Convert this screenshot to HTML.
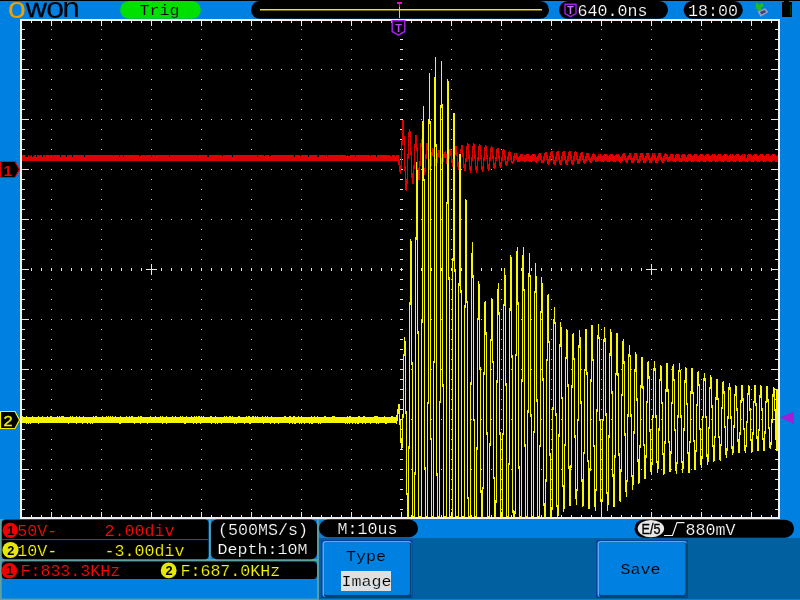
<!DOCTYPE html><html><head><meta charset="utf-8"><title>OWON oscilloscope</title>
<style>html,body{margin:0;padding:0;background:#0080e0;overflow:hidden}svg{display:block;will-change:transform}text{white-space:pre}</style></head><body>
<svg width="800" height="600" viewBox="0 0 800 600">
<rect width="800" height="600" fill="#0080e0"/>
<rect width="800" height="1" fill="#000" shape-rendering="crispEdges"/>
<text transform="scale(1.11 1)" font-family="'Liberation Sans','DejaVu Sans',sans-serif" font-size="29.5" fill="#000"><tspan x="6.94" y="17.5" fill="#f0a000">o</tspan><tspan x="23.2" y="16.8" font-size="26.4" stroke="#000" stroke-width="0.3">w</tspan><tspan x="41.35" y="17.5">o</tspan><tspan x="56.1" y="17" font-size="28.4">n</tspan></text>
<rect x="120.2" y="1" width="80.6" height="17.8" rx="8.9" fill="#00e000"/>
<text transform="translate(139.6 14.6) scale(1 0.88)" fill="#000" font-size="16.67" font-family="'Liberation Mono','DejaVu Sans Mono',monospace"  stroke="#00e000" stroke-width="0.2">Trig</text>
<rect x="251" y="1" width="298" height="17.8" rx="8.9" fill="#000"/>
<g shape-rendering="crispEdges"><rect x="260" y="9" width="282" height="1" fill="#e8e800"/><rect x="260" y="10" width="282" height="1" fill="#706800"/>
<rect x="397" y="2" width="5" height="2" fill="#ff00e0"/><rect x="399" y="4" width="1" height="3" fill="#ff00e0"/><rect x="399" y="7" width="1" height="11" fill="#c0c0c0"/></g>
<rect x="559" y="1" width="109" height="17.8" rx="8.9" fill="#000"/>
<path d="M565 4.2H576V13.5L570.5 16.6L565 13.5Z" fill="#000" stroke="#a020e8" stroke-width="1.4"/>
<text x="570.5" y="13.6" text-anchor="middle" fill="#d070ff" font-family="'Liberation Sans','DejaVu Sans',sans-serif" font-weight="bold" font-size="10.5">T</text>
<text x="577.5" y="15.6" fill="#ffffff" font-size="16.67" font-family="'Liberation Mono','DejaVu Sans Mono',monospace"  stroke="#000" stroke-width="0.2">640.0ns</text>
<rect x="683.6" y="1" width="59.2" height="17.8" rx="8.9" fill="#000"/>
<text x="688" y="15.6" fill="#ffffff" font-size="16.67" font-family="'Liberation Mono','DejaVu Sans Mono',monospace"  stroke="#000" stroke-width="0.2">18:00</text>
<g><path d="M757.5 11.3L765.2 8.2L768.4 12L760.6 16.8Z" fill="#98a0c8"/><path d="M759.8 11.9L764.6 9.9L766.2 12L761.5 14.6Z" fill="#3c4470"/><path d="M756 2.6L759.2 4.6L762.2 2.8L763.8 5.6L761 8L762.2 10.4L757.6 10.6L755.6 7.6Z" fill="#28b820"/></g>
<rect x="782" y="2" width="10" height="15" fill="#000" shape-rendering="crispEdges"/><rect x="784" y="1" width="5" height="1" fill="#000" shape-rendering="crispEdges"/><rect x="790" y="5" width="1" height="10" fill="#083408" shape-rendering="crispEdges"/>
<g shape-rendering="crispEdges">
<rect x="20" y="19" width="760" height="500" fill="#f4f0f0"/>
<rect x="22" y="21" width="756" height="496" fill="#000"/>
<g stroke="#c8c8c8" stroke-width="1" fill="none"><path d="M51.5 29V516" stroke-dasharray="1 9"/><path d="M101.5 29V516" stroke-dasharray="1 9"/><path d="M151.5 29V516" stroke-dasharray="1 9"/><path d="M201.5 29V516" stroke-dasharray="1 9"/><path d="M251.5 29V516" stroke-dasharray="1 9"/><path d="M301.5 29V516" stroke-dasharray="1 9"/><path d="M351.5 29V516" stroke-dasharray="1 9"/><path d="M451.5 29V516" stroke-dasharray="1 9"/><path d="M501.5 29V516" stroke-dasharray="1 9"/><path d="M551.5 29V516" stroke-dasharray="1 9"/><path d="M601.5 29V516" stroke-dasharray="1 9"/><path d="M651.5 29V516" stroke-dasharray="1 9"/><path d="M701.5 29V516" stroke-dasharray="1 9"/><path d="M751.5 29V516" stroke-dasharray="1 9"/><path d="M31 69.5H777" stroke-dasharray="1 9"/><path d="M31 119.5H777" stroke-dasharray="1 9"/><path d="M31 169.5H777" stroke-dasharray="1 9"/><path d="M31 219.5H777" stroke-dasharray="1 9"/><path d="M31 319.5H777" stroke-dasharray="1 9"/><path d="M31 369.5H777" stroke-dasharray="1 9"/><path d="M31 419.5H777" stroke-dasharray="1 9"/><path d="M31 469.5H777" stroke-dasharray="1 9"/></g>
<g stroke="#e8e8e8" stroke-width="1" fill="none"><path d="M31 269.5H777" stroke-width="3" stroke-dasharray="1 9"/><path d="M401.5 29V516" stroke-width="3" stroke-dasharray="1 9"/><path d="M146 269.5H157M151.5 264V275"/><path d="M646 269.5H657M651.5 264V275"/><path d="M31 22H777" stroke-width="2" stroke-dasharray="1 9"/><path d="M51 23.5H777" stroke-width="5" stroke-dasharray="1 49"/><path d="M31 516H777" stroke-width="2" stroke-dasharray="1 9"/><path d="M51 514.5H777" stroke-width="5" stroke-dasharray="1 49"/><path d="M23.5 29V516" stroke-width="3" stroke-dasharray="1 9"/><path d="M25.5 69V516" stroke-width="7" stroke-dasharray="1 49"/><path d="M776.5 29V516" stroke-width="3" stroke-dasharray="1 9"/><path d="M774.5 69V516" stroke-width="7" stroke-dasharray="1 49"/></g>
<path d="M22.5 155V161M23.5 155V161M24.5 155V161M25.5 157V161M26.5 157V161M27.5 157V161M28.5 155V161M29.5 157V161M30.5 156V161M31.5 155V161M32.5 157V161M33.5 156V161M34.5 155V161M35.5 155V161M36.5 157V161M37.5 155V161M38.5 155V161M39.5 156V161M40.5 155V161M41.5 155V161M42.5 157V161M43.5 155V161M44.5 155V161M45.5 157V161M46.5 155V161M47.5 155V161M48.5 155V161M49.5 156V161M50.5 155V161M51.5 155V161M52.5 155V161M53.5 155V161M54.5 155V161M55.5 155V161M56.5 155V161M57.5 155V161M58.5 155V161M59.5 155V161M60.5 157V161M61.5 155V161M62.5 155V161M63.5 155V161M64.5 155V161M65.5 155V161M66.5 157V161M67.5 155V161M68.5 155V161M69.5 155V161M70.5 155V161M71.5 155V161M72.5 157V161M73.5 155V161M74.5 155V161M75.5 155V161M76.5 155V161M77.5 155V161M78.5 155V161M79.5 155V161M80.5 155V161M81.5 155V161M82.5 155V161M83.5 155V161M84.5 157V161M85.5 155V161M86.5 155V161M87.5 155V161M88.5 155V161M89.5 155V161M90.5 155V161M91.5 155V161M92.5 155V161M93.5 155V161M94.5 155V161M95.5 155V161M96.5 155V161M97.5 155V161M98.5 155V161M99.5 155V161M100.5 155V161M101.5 155V161M102.5 155V161M103.5 155V161M104.5 155V161M105.5 155V161M106.5 155V161M107.5 155V161M108.5 155V161M109.5 155V161M110.5 155V161M111.5 155V161M112.5 155V161M113.5 156V161M114.5 155V161M115.5 155V161M116.5 155V161M117.5 155V161M118.5 155V161M119.5 157V161M120.5 155V161M121.5 155V161M122.5 155V161M123.5 157V161M124.5 155V161M125.5 155V161M126.5 155V161M127.5 155V161M128.5 155V161M129.5 155V161M130.5 155V161M131.5 155V161M132.5 155V161M133.5 155V161M134.5 155V161M135.5 155V161M136.5 155V161M137.5 155V161M138.5 155V161M139.5 157V161M140.5 156V161M141.5 155V161M142.5 155V161M143.5 155V161M144.5 155V161M145.5 156V161M146.5 155V161M147.5 155V161M148.5 155V161M149.5 155V161M150.5 155V161M151.5 157V161M152.5 155V161M153.5 155V161M154.5 155V161M155.5 156V161M156.5 155V161M157.5 155V161M158.5 155V161M159.5 155V161M160.5 155V161M161.5 155V161M162.5 155V161M163.5 155V161M164.5 155V161M165.5 155V161M166.5 155V161M167.5 155V161M168.5 155V161M169.5 157V161M170.5 155V161M171.5 155V161M172.5 155V161M173.5 155V161M174.5 155V161M175.5 155V161M176.5 155V161M177.5 155V161M178.5 155V161M179.5 155V161M180.5 155V161M181.5 155V161M182.5 155V161M183.5 155V161M184.5 155V161M185.5 155V161M186.5 155V161M187.5 155V161M188.5 155V161M189.5 155V161M190.5 155V161M191.5 155V161M192.5 155V161M193.5 155V161M194.5 155V161M195.5 155V161M196.5 155V161M197.5 156V161M198.5 155V161M199.5 155V161M200.5 155V161M201.5 155V161M202.5 155V161M203.5 155V161M204.5 155V161M205.5 155V161M206.5 155V161M207.5 157V161M208.5 157V161M209.5 155V161M210.5 155V161M211.5 155V161M212.5 155V161M213.5 155V161M214.5 155V161M215.5 155V161M216.5 155V161M217.5 155V161M218.5 155V161M219.5 155V161M220.5 155V161M221.5 155V161M222.5 156V161M223.5 155V161M224.5 155V161M225.5 155V161M226.5 155V161M227.5 155V161M228.5 155V161M229.5 155V161M230.5 155V161M231.5 155V161M232.5 157V161M233.5 155V161M234.5 155V161M235.5 155V161M236.5 155V161M237.5 155V161M238.5 155V161M239.5 155V161M240.5 155V161M241.5 155V161M242.5 155V161M243.5 155V161M244.5 155V161M245.5 155V161M246.5 155V161M247.5 155V161M248.5 155V161M249.5 155V161M250.5 155V161M251.5 155V161M252.5 155V161M253.5 155V161M254.5 155V161M255.5 155V161M256.5 155V161M257.5 157V161M258.5 155V161M259.5 155V161M260.5 155V161M261.5 155V161M262.5 155V161M263.5 155V161M264.5 156V161M265.5 155V161M266.5 155V161M267.5 155V161M268.5 155V161M269.5 157V161M270.5 156V161M271.5 155V161M272.5 155V161M273.5 155V161M274.5 155V161M275.5 155V161M276.5 155V161M277.5 155V161M278.5 155V161M279.5 155V161M280.5 155V161M281.5 155V161M282.5 155V161M283.5 155V161M284.5 155V161M285.5 155V161M286.5 155V161M287.5 155V161M288.5 155V161M289.5 155V161M290.5 155V161M291.5 155V161M292.5 155V161M293.5 155V161M294.5 157V161M295.5 155V161M296.5 155V161M297.5 155V161M298.5 155V161M299.5 155V161M300.5 156V161M301.5 155V161M302.5 155V161M303.5 155V161M304.5 155V161M305.5 155V161M306.5 155V161M307.5 155V161M308.5 157V161M309.5 155V161M310.5 155V161M311.5 155V161M312.5 155V161M313.5 155V161M314.5 155V161M315.5 155V161M316.5 155V161M317.5 157V161M318.5 157V161M319.5 155V161M320.5 155V161M321.5 155V161M322.5 155V161M323.5 155V161M324.5 155V161M325.5 156V161M326.5 155V161M327.5 157V161M328.5 155V161M329.5 155V161M330.5 155V161M331.5 155V161M332.5 155V161M333.5 155V161M334.5 155V161M335.5 155V161M336.5 155V161M337.5 155V161M338.5 155V161M339.5 155V161M340.5 155V161M341.5 155V161M342.5 155V161M343.5 155V161M344.5 155V161M345.5 155V161M346.5 156V161M347.5 155V161M348.5 156V161M349.5 156V161M350.5 155V161M351.5 155V161M352.5 155V161M353.5 155V161M354.5 155V161M355.5 157V161M356.5 155V161M357.5 155V161M358.5 155V161M359.5 155V161M360.5 155V161M361.5 155V161M362.5 155V161M363.5 155V161M364.5 155V161M365.5 155V161M366.5 155V161M367.5 155V161M368.5 155V161M369.5 155V161M370.5 156V161M371.5 155V161M372.5 155V161M373.5 155V161M374.5 155V161M375.5 155V161M376.5 157V161M377.5 155V161M378.5 155V161M379.5 155V161M380.5 155V161M381.5 155V161M382.5 155V161M383.5 155V161M384.5 155V161M385.5 155V161M386.5 155V161M387.5 155V161M388.5 155V161M389.5 155V161M390.5 156V161M391.5 157V161M392.5 155V161M393.5 155V161M394.5 155V161M395.5 157V161M396.5 155V161M397.5 155V161M398.5 155V165M399.5 160V172M400.5 165V174M401.5 141V169M402.5 120V145M403.5 120V140M404.5 136V171M405.5 166V190M406.5 179V191M407.5 154V184M408.5 132V159M409.5 129V137M410.5 131V155M411.5 151V178M412.5 173V184M413.5 165V184M414.5 144V169M415.5 135V148M416.5 135V151M417.5 147V172M418.5 168V180M419.5 161V180M420.5 143V166M421.5 139V147M422.5 140V158M423.5 154V173M424.5 168V175M425.5 154V172M426.5 143V159M427.5 143V151M428.5 147V164M429.5 159V170M430.5 161V170M431.5 152V166M432.5 148V156M433.5 149V157M434.5 152V164M435.5 159V166M436.5 159V166M437.5 153V163M438.5 150V157M439.5 150V158M440.5 153V162M441.5 158V164M442.5 158V164M443.5 154V162M444.5 152V158M445.5 151V158M446.5 154V164M447.5 160V166M448.5 155V165M449.5 149V159M450.5 149V156M451.5 151V163M452.5 159V167M453.5 160V167M454.5 151V164M455.5 146V155M456.5 146V156M457.5 152V167M458.5 162V170M459.5 159V170M460.5 149V164M461.5 145V153M462.5 145V157M463.5 153V168M464.5 164V171M465.5 158V171M466.5 146V162M467.5 143V150M468.5 144V159M469.5 154V170M470.5 166V173M471.5 157V171M472.5 146V161M473.5 143V150M474.5 144V159M475.5 154V170M476.5 166V173M477.5 157V171M478.5 146V161M479.5 144V150M480.5 145V159M481.5 155V170M482.5 166V172M483.5 157V171M484.5 147V161M485.5 145V151M486.5 146V159M487.5 155V169M488.5 164V171M489.5 157V170M490.5 148V161M491.5 146V152M492.5 147V159M493.5 155V168M494.5 163V169M495.5 157V168M496.5 149V161M497.5 148V153M498.5 148V159M499.5 155V166M500.5 162V168M501.5 157V167M502.5 150V161M503.5 149V155M504.5 150V160M505.5 155V165M506.5 161V166M507.5 156V165M508.5 152V161M509.5 151V156M510.5 152V160M511.5 155V163M512.5 161V164M513.5 156V163M514.5 153V161M515.5 155V158M516.5 153V160M517.5 155V162M518.5 157V162M519.5 156V162M520.5 154V161M521.5 154V160M522.5 154V161M523.5 157V161M524.5 155V162M525.5 155V162M526.5 154V161M527.5 154V160M528.5 154V161M529.5 155V162M530.5 156V162M531.5 155V162M532.5 154V161M533.5 154V160M534.5 154V161M535.5 155V162M536.5 157V163M537.5 156V162M538.5 154V161M539.5 153V158M540.5 153V160M541.5 156V163M542.5 160V163M543.5 156V163M544.5 153V161M545.5 152V157M546.5 152V160M547.5 155V164M548.5 159V165M549.5 156V164M550.5 152V161M551.5 151V156M552.5 151V160M553.5 155V164M554.5 160V165M555.5 156V165M556.5 152V161M557.5 151V156M558.5 151V160M559.5 155V164M560.5 160V165M561.5 156V165M562.5 152V161M563.5 151V156M564.5 151V160M565.5 155V164M566.5 160V165M567.5 156V165M568.5 152V161M569.5 151V156M570.5 151V160M571.5 155V164M572.5 160V165M573.5 156V165M574.5 152V161M575.5 151V156M576.5 152V160M577.5 155V164M578.5 159V164M579.5 156V164M580.5 153V161M581.5 152V157M582.5 152V160M583.5 155V163M584.5 159V164M585.5 156V163M586.5 153V161M587.5 153V158M588.5 153V160M589.5 156V162M590.5 158V163M591.5 156V163M592.5 154V161M593.5 153V159M594.5 154V160M595.5 155V162M596.5 157V162M597.5 156V162M598.5 154V161M599.5 156V159M600.5 154V161M601.5 155V162M602.5 156V162M603.5 155V162M604.5 154V161M605.5 154V160M606.5 154V161M607.5 155V162M608.5 156V162M609.5 155V162M610.5 154V161M611.5 154V160M612.5 154V161M613.5 155V162M614.5 156V162M615.5 155V162M616.5 154V161M617.5 155V160M618.5 154V161M619.5 155V162M620.5 157V163M621.5 156V162M622.5 154V161M623.5 153V158M624.5 153V160M625.5 155V162M626.5 158V163M627.5 156V163M628.5 155V160M629.5 153V158M630.5 153V160M631.5 156V163M632.5 158V163M633.5 156V163M634.5 153V161M635.5 153V158M636.5 153V160M637.5 155V163M638.5 159V163M639.5 156V163M640.5 153V161M641.5 153V158M642.5 153V160M643.5 155V163M644.5 158V163M645.5 156V163M646.5 153V161M647.5 153V158M648.5 153V160M649.5 155V163M650.5 158V163M651.5 156V163M652.5 153V161M653.5 155V158M654.5 153V160M655.5 155V163M656.5 158V163M657.5 156V163M658.5 153V161M659.5 153V158M660.5 153V160M661.5 156V162M662.5 158V163M663.5 156V163M664.5 154V161M665.5 153V159M666.5 154V160M667.5 155V162M668.5 157V162M669.5 156V162M670.5 154V161M671.5 154V160M672.5 154V161M673.5 155V162M674.5 158V162M675.5 155V162M676.5 154V161M677.5 154V160M678.5 154V161M679.5 155V162M680.5 158V162M681.5 155V162M682.5 154V161M683.5 154V160M684.5 154V161M685.5 155V162M686.5 157V162M687.5 155V162M688.5 154V161M689.5 154V160M690.5 154V161M691.5 155V162M692.5 156V162M693.5 155V162M694.5 154V161M695.5 154V160M696.5 154V161M697.5 155V162M698.5 156V162M699.5 155V162M700.5 154V161M701.5 154V160M702.5 154V161M703.5 155V162M704.5 156V162M705.5 155V162M706.5 154V161M707.5 154V160M708.5 154V161M709.5 155V162M710.5 156V162M711.5 155V162M712.5 154V161M713.5 155V160M714.5 154V161M715.5 155V162M716.5 156V162M717.5 155V162M718.5 154V161M719.5 154V160M720.5 154V161M721.5 155V162M722.5 156V162M723.5 155V162M724.5 154V161M725.5 154V160M726.5 154V161M727.5 155V162M728.5 156V162M729.5 155V162M730.5 154V161M731.5 156V160M732.5 154V161M733.5 155V162M734.5 156V162M735.5 155V162M736.5 154V161M737.5 154V160M738.5 154V161M739.5 155V162M740.5 156V162M741.5 155V162M742.5 154V161M743.5 156V160M744.5 154V161M745.5 155V162M746.5 158V162M747.5 155V162M748.5 154V161M749.5 154V160M750.5 154V161M751.5 155V162M752.5 156V162M753.5 155V162M754.5 154V161M755.5 154V160M756.5 154V161M757.5 155V162M758.5 156V162M759.5 155V162M760.5 154V161M761.5 154V160M762.5 154V161M763.5 155V162M764.5 156V162M765.5 155V162M766.5 154V161M767.5 154V160M768.5 154V161M769.5 155V162M770.5 156V162M771.5 155V162M772.5 154V161M773.5 154V160M774.5 154V161M775.5 155V162M776.5 156V162M777.5 155V162" stroke="#e00000" stroke-width="1" fill="none"/>
<path d="M22.5 416V423M23.5 417V423M24.5 417V423M25.5 417V423M26.5 416V424M27.5 417V423M28.5 417V424M29.5 417V423M30.5 417V424M31.5 417V423M32.5 416V423M33.5 417V423M34.5 417V423M35.5 417V423M36.5 417V423M37.5 417V423M38.5 416V424M39.5 417V423M40.5 417V423M41.5 417V423M42.5 416V423M43.5 417V423M44.5 417V423M45.5 417V423M46.5 417V423M47.5 416V423M48.5 417V423M49.5 417V423M50.5 416V423M51.5 416V423M52.5 417V423M53.5 417V423M54.5 417V423M55.5 417V423M56.5 417V423M57.5 416V423M58.5 417V423M59.5 416V423M60.5 417V423M61.5 416V423M62.5 416V423M63.5 416V423M64.5 417V423M65.5 417V423M66.5 417V423M67.5 417V423M68.5 417V424M69.5 417V423M70.5 416V423M71.5 417V423M72.5 416V423M73.5 417V423M74.5 417V423M75.5 417V423M76.5 416V424M77.5 417V423M78.5 417V423M79.5 416V423M80.5 417V423M81.5 417V423M82.5 417V424M83.5 416V423M84.5 417V423M85.5 417V423M86.5 417V423M87.5 417V424M88.5 417V423M89.5 417V423M90.5 417V424M91.5 417V423M92.5 417V424M93.5 416V423M94.5 417V423M95.5 416V423M96.5 416V423M97.5 417V423M98.5 417V423M99.5 417V423M100.5 417V423M101.5 417V423M102.5 416V423M103.5 417V423M104.5 417V423M105.5 417V423M106.5 416V423M107.5 417V423M108.5 416V423M109.5 417V423M110.5 416V423M111.5 417V423M112.5 416V423M113.5 417V423M114.5 417V423M115.5 416V423M116.5 417V423M117.5 417V423M118.5 417V423M119.5 417V424M120.5 416V424M121.5 417V423M122.5 417V423M123.5 417V423M124.5 417V423M125.5 417V423M126.5 416V423M127.5 417V423M128.5 417V423M129.5 416V423M130.5 417V423M131.5 416V423M132.5 416V423M133.5 417V423M134.5 417V424M135.5 417V423M136.5 417V423M137.5 417V423M138.5 416V423M139.5 417V423M140.5 416V424M141.5 416V423M142.5 417V423M143.5 417V423M144.5 417V423M145.5 417V423M146.5 417V423M147.5 417V424M148.5 417V423M149.5 417V423M150.5 416V423M151.5 417V423M152.5 417V423M153.5 417V423M154.5 417V423M155.5 416V423M156.5 417V423M157.5 417V423M158.5 417V423M159.5 417V423M160.5 416V423M161.5 417V423M162.5 416V424M163.5 417V423M164.5 417V423M165.5 417V423M166.5 416V424M167.5 417V423M168.5 417V423M169.5 417V423M170.5 417V423M171.5 417V423M172.5 416V423M173.5 417V423M174.5 417V423M175.5 416V423M176.5 417V423M177.5 417V423M178.5 417V423M179.5 417V423M180.5 416V423M181.5 417V423M182.5 416V423M183.5 417V423M184.5 417V424M185.5 417V424M186.5 416V423M187.5 417V423M188.5 417V423M189.5 417V423M190.5 417V423M191.5 416V423M192.5 417V423M193.5 417V424M194.5 416V423M195.5 417V423M196.5 416V424M197.5 417V423M198.5 416V423M199.5 416V423M200.5 417V424M201.5 416V423M202.5 417V423M203.5 416V423M204.5 417V423M205.5 417V423M206.5 417V423M207.5 417V423M208.5 417V423M209.5 417V423M210.5 416V423M211.5 416V424M212.5 417V423M213.5 417V423M214.5 417V423M215.5 416V424M216.5 417V423M217.5 417V424M218.5 417V423M219.5 417V423M220.5 417V423M221.5 417V424M222.5 417V423M223.5 417V423M224.5 416V423M225.5 417V423M226.5 416V423M227.5 417V423M228.5 417V423M229.5 416V423M230.5 416V423M231.5 417V423M232.5 416V423M233.5 417V423M234.5 417V424M235.5 417V423M236.5 417V424M237.5 417V423M238.5 416V423M239.5 416V423M240.5 417V423M241.5 417V423M242.5 417V423M243.5 417V423M244.5 417V424M245.5 417V423M246.5 416V423M247.5 417V423M248.5 416V423M249.5 416V424M250.5 417V424M251.5 417V423M252.5 416V423M253.5 416V423M254.5 417V423M255.5 416V423M256.5 417V423M257.5 416V423M258.5 417V423M259.5 417V423M260.5 417V423M261.5 417V423M262.5 416V423M263.5 417V424M264.5 417V423M265.5 416V423M266.5 417V423M267.5 416V423M268.5 417V423M269.5 417V423M270.5 417V424M271.5 416V423M272.5 417V423M273.5 417V423M274.5 417V424M275.5 417V423M276.5 417V423M277.5 417V423M278.5 417V424M279.5 417V423M280.5 417V423M281.5 417V423M282.5 417V423M283.5 417V423M284.5 416V423M285.5 416V423M286.5 417V423M287.5 417V423M288.5 417V423M289.5 416V424M290.5 416V423M291.5 417V423M292.5 417V424M293.5 416V423M294.5 416V424M295.5 417V424M296.5 417V423M297.5 417V423M298.5 416V423M299.5 417V424M300.5 417V423M301.5 416V424M302.5 417V423M303.5 417V423M304.5 417V424M305.5 417V423M306.5 417V423M307.5 417V423M308.5 417V423M309.5 417V424M310.5 417V423M311.5 416V424M312.5 417V424M313.5 417V423M314.5 416V423M315.5 417V423M316.5 417V423M317.5 416V423M318.5 417V424M319.5 417V423M320.5 417V424M321.5 417V423M322.5 417V423M323.5 417V423M324.5 416V423M325.5 416V423M326.5 417V423M327.5 417V423M328.5 417V423M329.5 417V423M330.5 417V423M331.5 417V423M332.5 416V423M333.5 416V423M334.5 416V423M335.5 417V423M336.5 417V423M337.5 417V423M338.5 417V423M339.5 417V423M340.5 417V423M341.5 417V423M342.5 417V423M343.5 417V423M344.5 417V423M345.5 417V424M346.5 417V423M347.5 416V424M348.5 417V423M349.5 416V424M350.5 416V423M351.5 417V423M352.5 417V424M353.5 417V423M354.5 417V423M355.5 417V424M356.5 417V423M357.5 417V424M358.5 416V424M359.5 416V423M360.5 417V423M361.5 417V423M362.5 417V424M363.5 416V423M364.5 416V423M365.5 417V424M366.5 417V423M367.5 417V423M368.5 417V423M369.5 417V423M370.5 417V424M371.5 417V423M372.5 417V423M373.5 417V423M374.5 416V423M375.5 416V423M376.5 416V424M377.5 416V423M378.5 417V424M379.5 417V423M380.5 417V423M381.5 417V423M382.5 417V423M383.5 417V423M384.5 416V423M385.5 417V424M386.5 417V424M387.5 417V423M388.5 417V423M389.5 417V423M390.5 417V423M391.5 416V423M392.5 416V423M393.5 417V423M394.5 417V423M395.5 417V423M396.5 415V424M397.5 409V421M398.5 404V414M399.5 404V425M400.5 420V443M401.5 438V449M402.5 414V448M403.5 354V418M404.5 337V356M405.5 341V414M406.5 411V495M407.5 493V517M408.5 446V517M409.5 302V449M410.5 239V305M411.5 241V365M412.5 362V517M413.5 516V517M414.5 472V517M415.5 237V475M416.5 162V240M417.5 170V334M418.5 331V517M419.5 516V517M420.5 516V517M421.5 320V517M422.5 121V323M423.5 106V181M424.5 179V470M425.5 467V517M426.5 516V517M427.5 402V517M428.5 119V404M429.5 73V124M430.5 121V440M431.5 438V517M432.5 516V517M433.5 361V517M434.5 77V363M435.5 57V147M436.5 144V476M437.5 473V517M438.5 516V517M439.5 401V517M440.5 105V403M441.5 61V108M442.5 104V387M443.5 384V517M444.5 516V517M445.5 516V517M446.5 202V517M447.5 79V204M448.5 81V280M449.5 277V517M450.5 516V517M451.5 516V517M452.5 258V517M453.5 113V261M454.5 113V272M455.5 269V517M456.5 516V517M457.5 516V517M458.5 283V517M459.5 154V286M460.5 154V293M461.5 290V517M462.5 516V517M463.5 516V517M464.5 305V517M465.5 199V308M466.5 200V303M467.5 301V499M468.5 497V517M469.5 516V517M470.5 382V517M471.5 253V385M472.5 242V278M473.5 275V421M474.5 419V517M475.5 516V517M476.5 447V517M477.5 318V450M478.5 281V320M479.5 284V370M480.5 367V493M481.5 490V517M482.5 487V517M483.5 372V489M484.5 302V375M485.5 301V335M486.5 332V435M487.5 432V517M488.5 516V517M489.5 443V517M490.5 339V446M491.5 298V341M492.5 299V363M493.5 361V479M494.5 477V517M495.5 500V517M496.5 380V503M497.5 289V383M498.5 283V315M499.5 312V435M500.5 432V517M501.5 516V517M502.5 433V517M503.5 304V435M504.5 268V306M505.5 275V386M506.5 383V517M507.5 516V517M508.5 463V517M509.5 308V465M510.5 255V311M511.5 257V358M512.5 355V513M513.5 510V517M514.5 511V517M515.5 354V514M516.5 251V356M517.5 247V305M518.5 302V469M519.5 466V517M520.5 516V517M521.5 379V517M522.5 255V382M523.5 247V291M524.5 289V447M525.5 444V517M526.5 516V517M527.5 410V517M528.5 273V413M529.5 253V277M530.5 275V417M531.5 414V517M532.5 516V517M533.5 431V517M534.5 291V433M535.5 263V293M536.5 276V402M537.5 399V517M538.5 516V517M539.5 445V517M540.5 311V447M541.5 277V313M542.5 283V381M543.5 378V506M544.5 503V517M545.5 479V517M546.5 359V482M547.5 295V361M548.5 294V343M549.5 341V456M550.5 453V517M551.5 507V517M552.5 407V510M553.5 319V410M554.5 307V324M555.5 322V416M556.5 413V507M557.5 505V517M558.5 434V516M559.5 344V437M560.5 322V347M561.5 327V399M562.5 397V487M563.5 485V512M564.5 444V509M565.5 357V446M566.5 329V359M567.5 330V387M568.5 384V469M569.5 466V506M570.5 465V506M571.5 385V468M572.5 334V388M573.5 333V360M574.5 358V438M575.5 435V499M576.5 489V505M577.5 419V491M578.5 345V421M579.5 330V348M580.5 337V404M581.5 401V482M582.5 479V507M583.5 452V506M584.5 369V454M585.5 329V371M586.5 329V375M587.5 372V462M588.5 460V509M589.5 468V509M590.5 379V471M591.5 325V382M592.5 325V361M593.5 359V447M594.5 445V507M595.5 489V511M596.5 409V491M597.5 335V412M598.5 324V339M599.5 337V421M600.5 419V502M601.5 499V514M602.5 419V502M603.5 339V421M604.5 327V342M605.5 338V416M606.5 413V494M607.5 492V511M608.5 435V505M609.5 353V438M610.5 329V356M611.5 332V394M612.5 391V477M613.5 474V507M614.5 455V507M615.5 373V458M616.5 333V375M617.5 333V376M618.5 373V456M619.5 453V501M620.5 469V502M621.5 394V472M622.5 341V396M623.5 339V364M624.5 361V436M625.5 433V492M626.5 480V497M627.5 414V482M628.5 354V417M629.5 345V357M630.5 355V417M631.5 414V477M632.5 475V490M633.5 431V485M634.5 369V434M635.5 352V372M636.5 354V401M637.5 398V462M638.5 459V484M639.5 445V483M640.5 385V448M641.5 357V388M642.5 357V389M643.5 386V446M644.5 444V479M645.5 455V479M646.5 401V458M647.5 362V403M648.5 361V379M649.5 376V432M650.5 429V472M651.5 462V475M652.5 415V465M653.5 368V418M654.5 361V371M655.5 368V418M656.5 415V463M657.5 461V473M658.5 428V469M659.5 379V431M660.5 365V381M661.5 366V404M662.5 402V455M663.5 453V475M664.5 441V474M665.5 389V444M666.5 363V392M667.5 363V392M668.5 389V443M669.5 441V472M670.5 451V472M671.5 402V454M672.5 366V404M673.5 364V381M674.5 379V431M675.5 429V471M676.5 462V474M677.5 415V464M678.5 370V418M679.5 363V372M680.5 370V418M681.5 415V463M682.5 461V473M683.5 428V469M684.5 380V431M685.5 367V383M686.5 368V405M687.5 403V454M688.5 452V473M689.5 441V473M690.5 391V443M691.5 368V394M692.5 368V394M693.5 392V442M694.5 440V470M695.5 450V470M696.5 404V452M697.5 372V406M698.5 371V386M699.5 384V430M700.5 428V465M701.5 456V468M702.5 416V459M703.5 378V418M704.5 373V381M705.5 378V418M706.5 416V457M707.5 454V465M708.5 427V462M709.5 387V429M710.5 375V389M711.5 377V408M712.5 405V447M713.5 445V462M714.5 436V461M715.5 397V438M716.5 379V400M717.5 379V400M718.5 398V438M719.5 436V460M720.5 444V461M721.5 407V446M722.5 382V409M723.5 381V394M724.5 391V428M725.5 426V455M726.5 448V458M727.5 416V451M728.5 387V419M729.5 383V390M730.5 387V419M731.5 416V449M732.5 446V455M733.5 425V453M734.5 394V428M735.5 385V396M736.5 386V411M737.5 408V442M738.5 439V453M739.5 432V453M740.5 400V435M741.5 385V403M742.5 385V401M743.5 398V430M744.5 428V451M745.5 445V453M746.5 421V447M747.5 393V423M748.5 385V395M749.5 386V411M750.5 408V441M751.5 439V453M752.5 432V452M753.5 401V435M754.5 385V403M755.5 385V406M756.5 403V439M757.5 436V451M758.5 429V451M759.5 395V431M760.5 385V398M761.5 386V411M762.5 408V440M763.5 438V451M764.5 431V451M765.5 401V434M766.5 386V403M767.5 386V402M768.5 399V429M769.5 427V448M770.5 442V449M771.5 420V445M772.5 394V423M773.5 387V397M774.5 388V411M775.5 409V439M776.5 389V451M777.5 389V451" stroke="#f6f600" stroke-width="1" fill="none"/>
</g>
<path d="M392.2 20.7H404.8V31.5L398.5 35.2L392.2 31.5Z" fill="#000" stroke="#a020e8" stroke-width="1.5"/>
<text x="398.5" y="31.6" text-anchor="middle" fill="#c040ff" font-family="'Liberation Sans','DejaVu Sans',sans-serif" font-weight="bold" font-size="11">T</text>
<path d="M780 417.5L794 411.5V424Z" fill="#a020d8"/>
<path d="M0.5 161.5H15L19.5 169.5L15 177.5H0.5Z" fill="#000" stroke="#f00000" stroke-width="1.2"/>
<text transform="translate(8 175.6) scale(1.08 1)" text-anchor="middle" fill="#f00000" font-family="'Liberation Sans','DejaVu Sans',sans-serif" font-weight="bold" font-size="14.7">1</text>
<path d="M0.5 411.5H15L19.5 420L15 428.5H0.5Z" fill="#000" stroke="#f0f000" stroke-width="1.2"/>
<text transform="translate(8.2 425.5) scale(1.12 1)" text-anchor="middle" fill="#f0f000" stroke="#f0f000" stroke-width="0.3" font-family="'Liberation Sans','DejaVu Sans',sans-serif" font-size="14.7">2</text>
<rect x="319" y="538" width="481" height="61" fill="#0060a0" shape-rendering="crispEdges"/>
<g fill="#60a0a0">
<rect x="0" y="519" width="1.8" height="81"/>
<rect x="0" y="519" width="330" height="0.7"/>
<rect x="0" y="559" width="319" height="2.2"/>
<rect x="209" y="519" width="1.7" height="41"/>
<rect x="317.1" y="519" width="1.8" height="81"/>
<rect x="0" y="598.6" width="319" height="1.4"/>
</g>
<rect x="1.8" y="519.6" width="206.8" height="39.6" rx="4" fill="#000"/>
<rect x="1.8" y="539.2" width="206.8" height="0.9" fill="#1868b8"/>
<rect x="211" y="519.6" width="106" height="39.6" rx="6" fill="#000"/>
<rect x="1.8" y="561.6" width="315.2" height="17.5" rx="4" fill="#000"/>
<circle cx="10.2" cy="530.3" r="7.6" fill="#f00000"/><text x="10.5" y="534.9" text-anchor="middle" font-family="'Liberation Sans','DejaVu Sans',sans-serif" font-weight="bold" font-size="12.8" fill="#000">1</text>
<circle cx="10.5" cy="550.0" r="8.1" fill="#e8e800"/><text x="10.8" y="554.6" text-anchor="middle" font-family="'Liberation Sans','DejaVu Sans',sans-serif" font-weight="bold" font-size="12.8" fill="#000">2</text>
<circle cx="9.3" cy="570.8" r="7.8" fill="#f00000"/><text x="9.600000000000001" y="575.4" text-anchor="middle" font-family="'Liberation Sans','DejaVu Sans',sans-serif" font-weight="bold" font-size="12.8" fill="#000">1</text>
<circle cx="168.7" cy="570.4" r="7.9" fill="#e8e800"/><text x="169.0" y="575.0" text-anchor="middle" font-family="'Liberation Sans','DejaVu Sans',sans-serif" font-weight="bold" font-size="12.8" fill="#000">2</text>
<text x="17.2" y="536" fill="#ff0808" font-size="16.67" font-family="'Liberation Mono','DejaVu Sans Mono',monospace"  stroke="#000" stroke-width="0.2">50V-</text>
<text x="104.6" y="536" fill="#ff0808" font-size="16.67" font-family="'Liberation Mono','DejaVu Sans Mono',monospace"  stroke="#000" stroke-width="0.2">2.00div</text>
<text x="17.2" y="556.3" fill="#f6f600" font-size="16.67" font-family="'Liberation Mono','DejaVu Sans Mono',monospace"  stroke="#000" stroke-width="0.2">10V-</text>
<text x="104.6" y="556.3" fill="#f6f600" font-size="16.67" font-family="'Liberation Mono','DejaVu Sans Mono',monospace"  stroke="#000" stroke-width="0.2">-3.00div</text>
<text x="20.4" y="576.3" fill="#ff0808" font-size="16.67" font-family="'Liberation Mono','DejaVu Sans Mono',monospace"  stroke="#000" stroke-width="0.2">F:833.3KHz</text>
<text x="180.4" y="576.3" fill="#f6f600" font-size="16.67" font-family="'Liberation Mono','DejaVu Sans Mono',monospace"  stroke="#000" stroke-width="0.2">F:687.0KHz</text>
<text x="218" y="535" fill="#ffffff" font-size="16.67" font-family="'Liberation Mono','DejaVu Sans Mono',monospace"  stroke="#000" stroke-width="0.2">(500MS/s)</text>
<text transform="translate(217.6 554) scale(1 0.93)" fill="#ffffff" font-size="16.67" font-family="'Liberation Mono','DejaVu Sans Mono',monospace"  stroke="#000" stroke-width="0.2">Depth:10M</text>
<rect x="319" y="519.6" width="99" height="17.6" rx="8.8" fill="#000"/>
<text x="337.5" y="534.3" fill="#ffffff" font-size="16.67" font-family="'Liberation Mono','DejaVu Sans Mono',monospace"  stroke="#000" stroke-width="0.2">M:10us</text>
<rect x="634.5" y="519.7" width="159.5" height="18" rx="9" fill="#000"/>
<ellipse cx="650.9" cy="528.6" rx="13.2" ry="8.6" fill="#e8e8e8"/>
<text x="641.6" y="533.5" fill="#000" stroke="#000" stroke-width="0.35" font-family="'Liberation Sans','DejaVu Sans',sans-serif" font-size="13.8" textLength="19" lengthAdjust="spacingAndGlyphs">E/5</text>
<path d="M664 535.5H672.5L677 522.6H684.5" fill="none" stroke="#f0f0f0" stroke-width="1.2"/>
<text x="685.5" y="535.2" fill="#ffffff" font-size="16.67" font-family="'Liberation Mono','DejaVu Sans Mono',monospace"  stroke="#000" stroke-width="0.2">880mV</text>
<rect x="321.0" y="540" width="91.5" height="58" rx="1" fill="#0040a0"/><rect x="322.5" y="541" width="89" height="56" rx="3" fill="#58a8f4"/><rect x="324.0" y="542.5" width="87.5" height="54.5" rx="2" fill="#004468"/><rect x="324.0" y="542.5" width="85.9" height="52.5" rx="2" fill="#0080e0"/>
<text transform="translate(346 561.4) scale(1 0.88)" fill="#000" font-size="16.67" font-family="'Liberation Mono','DejaVu Sans Mono',monospace"  stroke="#0080e0" stroke-width="0.2">Type</text>
<rect x="341" y="571" width="50" height="20" fill="#e0e0e0" shape-rendering="crispEdges"/>
<text transform="translate(341.5 586) scale(1 0.88)" fill="#000" font-size="16.67" font-family="'Liberation Mono','DejaVu Sans Mono',monospace"  stroke="#e0e0e0" stroke-width="0.2">Image</text>
<rect x="596.0" y="540" width="92.0" height="58" rx="1" fill="#0040a0"/><rect x="597.5" y="541" width="89.5" height="56" rx="3" fill="#58a8f4"/><rect x="599.0" y="542.5" width="88.0" height="54.5" rx="2" fill="#004468"/><rect x="599.0" y="542.5" width="86.4" height="52.5" rx="2" fill="#0080e0"/>
<text transform="translate(620.5 573.6) scale(1 0.88)" fill="#000" font-size="16.67" font-family="'Liberation Mono','DejaVu Sans Mono',monospace"  stroke="#0080e0" stroke-width="0.2">Save</text>
</svg></body></html>
